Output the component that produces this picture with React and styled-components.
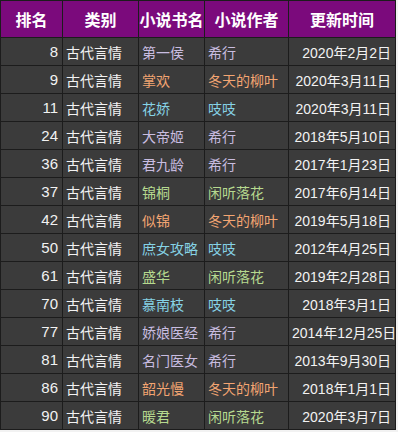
import React from 'react';
import styled, { createGlobalStyle } from 'styled-components';

const GlobalStyle = createGlobalStyle`
  body {
    margin: 0;
    background: #f2f2f2;
    font-family: "Liberation Sans", "Noto Sans CJK SC", sans-serif;
  }
  * { box-sizing: border-box; }
`;

const Table = styled.table`
  border-collapse: collapse;
  width: 395px;
  table-layout: fixed;
  background: #3b3b3b;
`;

const Col = styled.col`
  width: ${p => p.$w}px;
`;

const HeadCell = styled.th`
  background: #7b0a7c;
  color: #ffffff;
  font-size: 16px;
  font-weight: bold;
  height: 37px;
  padding: 0;
  text-align: center;
  border: 1px solid #1c1c1c;
  white-space: nowrap;
`;

const Cell = styled.td`
  height: 28px;
  padding: 0 3px;
  font-size: 14px;
  color: ${p => p.$color || '#f2f2f2'};
  text-align: ${p => (p.$right ? 'right' : 'left')};
  border: 1px solid #1c1c1c;
  white-space: nowrap;
  overflow: hidden;
`;

const NumCell = styled(Cell)`
  font-size: ${p => p.$size || 14}px;
  padding-right: 4px;
`;

const authorColors = {
  '希行': '#c9bde0',
  '冬天的柳叶': '#f3a572',
  '吱吱': '#86d3e6',
  '闲听落花': '#b6d98f',
};

const rows = [
  [8, '第一侯', '希行', '2020年2月2日'],
  [9, '掌欢', '冬天的柳叶', '2020年3月11日'],
  [11, '花娇', '吱吱', '2020年3月11日'],
  [24, '大帝姬', '希行', '2018年5月10日'],
  [36, '君九龄', '希行', '2017年1月23日'],
  [37, '锦桐', '闲听落花', '2017年6月14日'],
  [42, '似锦', '冬天的柳叶', '2019年5月18日'],
  [50, '庶女攻略', '吱吱', '2012年4月25日'],
  [61, '盛华', '闲听落花', '2019年2月28日'],
  [70, '慕南枝', '吱吱', '2018年3月1日'],
  [77, '娇娘医经', '希行', '2014年12月25日'],
  [81, '名门医女', '希行', '2013年9月30日'],
  [86, '韶光慢', '冬天的柳叶', '2018年1月1日'],
  [90, '暖君', '闲听落花', '2020年3月7日'],
];

const App = () => (
  <>
    <GlobalStyle />
    <Table>
      <colgroup>
        <Col $w={62} />
        <Col $w={76} />
        <Col $w={66} />
        <Col $w={84} />
        <Col $w={107} />
      </colgroup>
      <thead>
        <tr>
          <HeadCell>排名</HeadCell>
          <HeadCell>类别</HeadCell>
          <HeadCell>小说书名</HeadCell>
          <HeadCell>小说作者</HeadCell>
          <HeadCell>更新时间</HeadCell>
        </tr>
      </thead>
      <tbody>
        {rows.map(([rank, book, author, date]) => (
          <tr key={rank}>
            <NumCell $right $size={15}>{rank}</NumCell>
            <Cell>古代言情</Cell>
            <Cell $color={authorColors[author]}>{book}</Cell>
            <Cell $color={authorColors[author]}>{author}</Cell>
            <NumCell $right>{date}</NumCell>
          </tr>
        ))}
      </tbody>
    </Table>
  </>
);

export default App;
